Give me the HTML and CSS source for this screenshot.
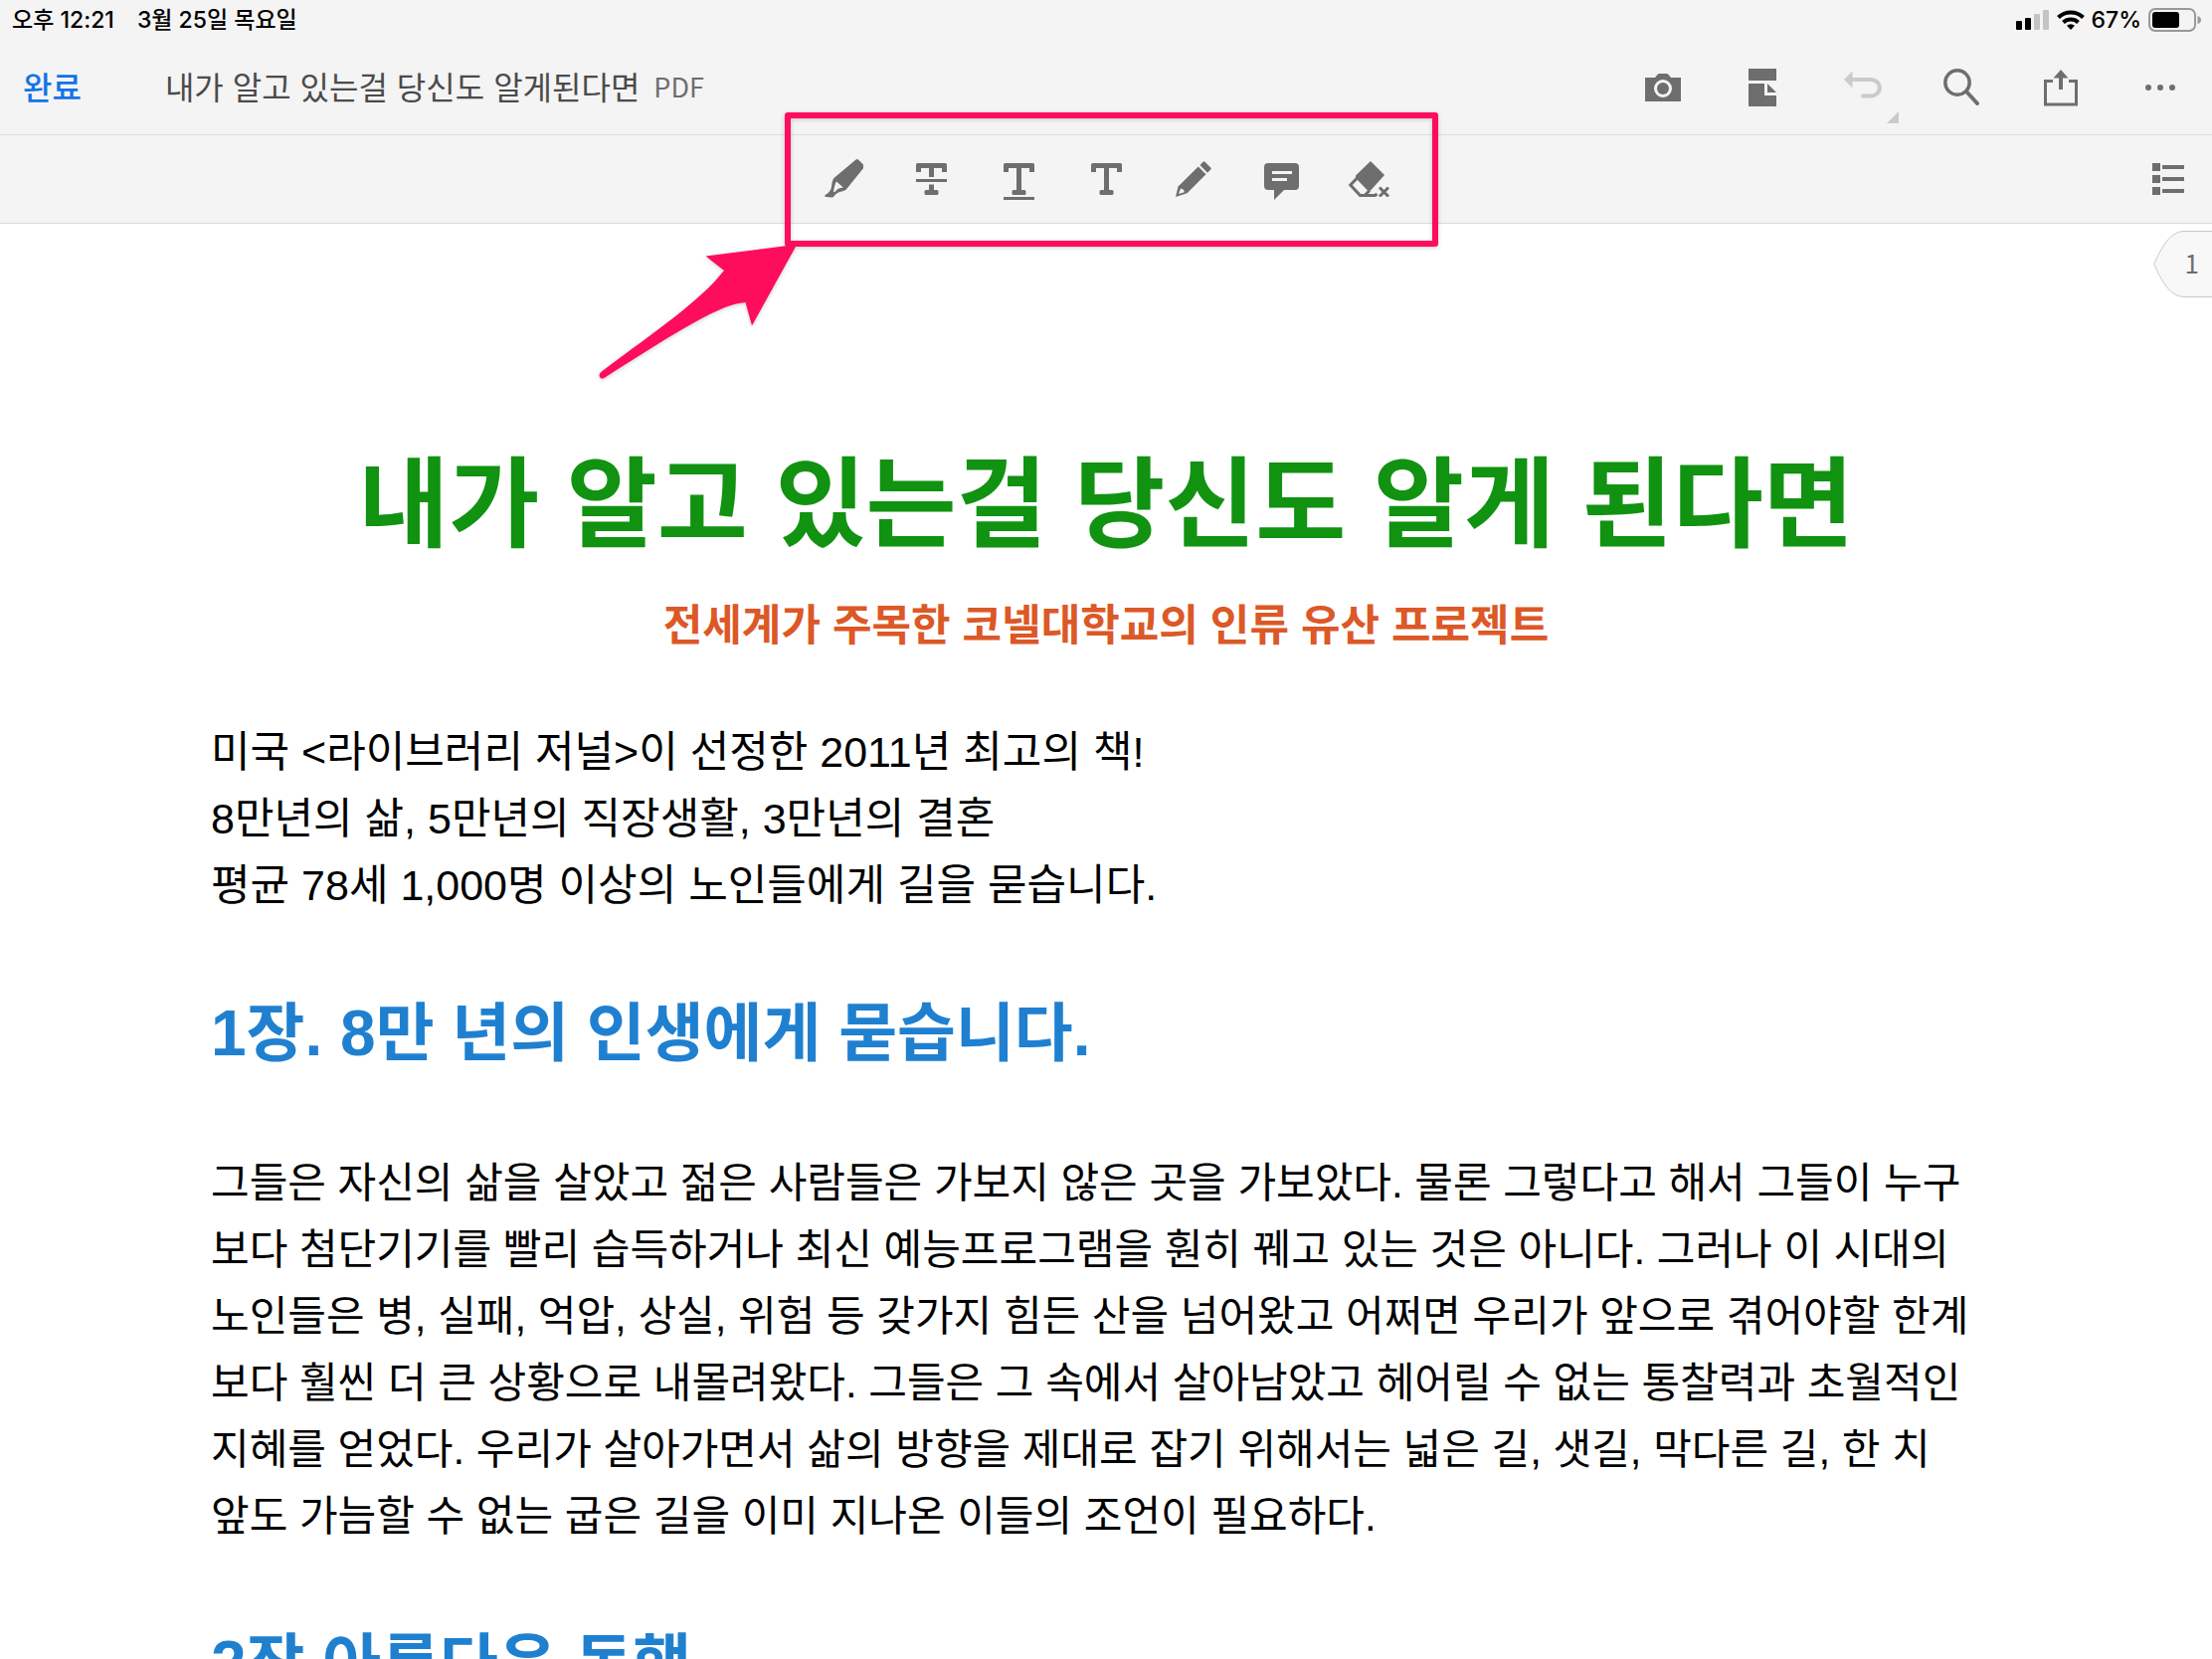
FILE: index.html
```html
<!DOCTYPE html>
<html lang="ko">
<head>
<meta charset="utf-8">
<meta name="viewport" content="width=device-width, initial-scale=1">
<title>내가 알고 있는걸 당신도 알게된다면</title>
<link rel="stylesheet" href="styles.css">
</head>
<body>
<header class="chrome">
  <div class="status">
    <span>오후 12:21</span>
    <span>3월 25일 목요일</span>
    <div class="status-right">
      <svg width="34" height="20" viewBox="0 0 34 20" aria-hidden="true"><rect y="11" width="6" height="9" rx="1"/><rect x="9" y="8" width="6" height="12" rx="1"/><g fill="#c4c4c4"><rect x="18" y="4" width="6" height="16" rx="1"/><rect x="27" width="6" height="20" rx="1"/></g></svg>
      <svg width="28" height="20" viewBox="0 0 28 20" aria-hidden="true"><g fill="none" stroke="#000" stroke-width="4"><path d="M1.500 7.500a18 18 0 0 1 25 0"/><path d="M6.500 12.500a11 11 0 0 1 15 0"/></g><path d="M14 20l-4-4.200a6 6 0 0 1 8 0z"/></svg>
      <span class="percent">67%</span>
      <svg width="54" height="24" viewBox="0 0 54 24" aria-hidden="true"><rect x="1" y="1" width="46" height="22" rx="6" fill="none" stroke="#999" stroke-width="2"/><rect x="4" y="4" width="27" height="16" rx="3"/><path d="M49.500 8q3.500 1 3.500 4t-3.500 4z" fill="#999"/></svg>
    </div>
  </div>
  <nav class="navbar">
    <button class="done">완료</button>
    <h1 class="file">내가 알고 있는걸 당신도 알게된다면</h1>
    <span class="type">PDF</span>
    <div class="actions">
      <button class="action" aria-label="카메라"><svg width="36" height="28" viewBox="0 0 36 28"><path fill-rule="evenodd" d="M0 4h10l3-3.500q.5-.5 1-.5h8q.5 0 1 .5L26 4h10v24H0zM18 6a9 9 0 1 0 0 18 9 9 0 0 0 0-18z"/><circle cx="18" cy="15" r="6"/></svg></button>
      <button class="action" aria-label="보기"><svg width="28" height="38" viewBox="0 0 28 38"><path d="M0 0h28v12H0zM0 15h16v12h12v11H0zM19 15l9 9h-9z"/></svg></button>
      <button class="action undo" aria-label="실행 취소"><svg width="56" height="54" viewBox="0 0 56 54"><path d="M9 10h19a8.500 8 0 0 1 0 16.500H20" fill="none" stroke="#cacaca" stroke-width="4" stroke-linecap="round"/><path d="M1 10l8.500-8.500v17z"/><path d="M56 42v12H44z"/></svg></button>
      <button class="action" aria-label="검색"><svg width="36" height="37" viewBox="0 0 36 37"><g fill="none" stroke="#6e6e6e" stroke-width="3.500"><circle cx="14" cy="14" r="12.200"/><path d="M23 23l11 12" stroke-width="4" stroke-linecap="round"/></g></svg></button>
      <button class="action" aria-label="공유"><svg width="36" height="38" viewBox="0 0 36 38"><path d="M10 12.500H2.500V36h31V12.500H26" fill="none" stroke="#6e6e6e" stroke-width="3"/><path d="M18 1l7.500 8.500H20V21h-4V9.500h-5.500z"/></svg></button>
      <button class="action" aria-label="더보기"><svg width="32" height="6" viewBox="0 0 32 6"><circle cx="4" cy="3" r="3"/><circle cx="16" cy="3" r="3"/><circle cx="28" cy="3" r="3"/></svg></button>
    </div>
  </nav>
  <div class="toolbar">
    <div class="tools">
      <button class="tool" aria-label="강조"><svg width="40" height="40" viewBox="828 160 40 40"><path fill-rule="evenodd" d="M860.500 160.500q1.500-1 3 .5l5 5q1 1.200 0 2.700L852 189q-1.500 2.500-4 3-6 1-8.500 4-1.500 2.500-3 2.500l-6-.500q-2.500-.700-.5-2.200 5.500-3 6-8 .500-6 2.200-8.500zM841 182.500q-2 3-3 10.500l1.800-.2q2-3.800 8-4.300z"/></svg></button>
      <button class="tool" aria-label="취소선"><svg width="31" height="32" viewBox="0 0 31 32"><path d="M1.500 0h28Q31 0 31 1.500V9h-5V5h-8v9h-5V5H5v4H0V1.500Q0 0 1.500 0zM0 16h31v3H0zM13 21.500h5V27h3q1.500 0 1.500 1.500v2q0 1.500-1.500 1.500h-11q-1.500 0-1.500-1.500v-2Q8.500 27 10 27h3z"/></svg></button>
      <button class="tool" aria-label="밑줄"><svg class="low" width="31" height="37" viewBox="0 0 31 37"><path d="M1.500 0h28Q31 0 31 1.500V9h-5V5h-8v22h3q1.500 0 1.500 1.500v2q0 1.500-1.500 1.500h-11q-1.500 0-1.500-1.500v-2Q8.500 27 10 27h3V5H5v4H0V1.500Q0 0 1.500 0zM0 34h31v3H0z"/></svg></button>
      <button class="tool" aria-label="텍스트"><svg width="31" height="32" viewBox="0 0 31 32"><path d="M1.500 0h28Q31 0 31 1.500V9h-5V5h-8v22h3q1.500 0 1.500 1.500v2q0 1.500-1.500 1.500h-11q-1.500 0-1.500-1.500v-2Q8.500 27 10 27h3V5H5v4H0V1.500Q0 0 1.500 0z"/></svg></button>
      <button class="tool" aria-label="그리기"><svg width="36" height="36" viewBox="0 0 36 36"><path fill-rule="evenodd" d="M27.500.8q1-1 2 0l5.700 5.700q1 1 0 2L32 11.700 24.500 4zM22.800 5.500l7.700 7.700-19 19L0 36l2.500-10.500zM5 27.500L3 33l5.700-1.800q0-3-3.700-3.700z"/></svg></button>
      <button class="tool" aria-label="메모"><svg class="low" width="35" height="37" viewBox="0 0 35 37"><path fill-rule="evenodd" d="M4 0h27q4 0 4 4v19q0 4-4 4H20L10 37V27H4q-4 0-4-4V4q0-4 4-4zM8 8v3h20V8zM8 15v3h15v-3z"/></svg></button>
      <button class="tool" aria-label="지우개"><svg width="42" height="36" viewBox="-1 0 42 36"><path d="M22 0l14 14-14 15.500h-3L7 17v-2.500z"/><path d="M8.500 17L1.800 24l9.700 10.500h4.500l5-5M11 34.500h15.500l2-1.500" fill="none" stroke="#6e6e6e" stroke-width="3"/><path d="M31 26.500l9 9M40 26.500l-9 9" stroke="#6e6e6e" stroke-width="3"/></svg></button>
      <svg class="callout" width="850" height="280" viewBox="600 110 850 280" aria-hidden="true"><g fill="#fd0d5c"><path d="M709.500 257.500L792 247l8 1-44 79.500-6.500-23.500c-26 2-65 27-142 76q-3 2-4.500-1t2-5.500c57-43 98-70 123-101.500z"/></g><rect x="792" y="116" width="651" height="129" fill="none" stroke="#fd0d5c" stroke-width="6" stroke-linejoin="round"/></svg>
    </div>
    <button class="tool list" aria-label="목록"><svg width="32" height="32" viewBox="0 0 32 32"><path d="M0 0h8v8H0zM10 2h22v4H10zM0 12h8v8H0zM10 14h22v4H10zM0 24h8v8H0zM10 26h22v4H10z"/></svg></button>
  </div>
</header>
<main class="viewer">
  <button class="page-tag" aria-label="1 페이지"><svg width="59" height="67" viewBox="0 0 59 67"><path d="M60 .5H31C17 .5 8 17 .7 33.500 8 50 17 66.500 31 66.500h29" fill="#f8f8f8" stroke="#c8c8c8"/></svg><span>1</span></button>
  <article class="page">
    <h2 class="title">내가 알고 있는걸 당신도 알게 된다면</h2>
    <p class="subtitle">전세계가 주목한 코넬대학교의 인류 유산 프로젝트</p>
    <p class="lead">미국 &lt;라이브러리 저널&gt;이 선정한 2011년 최고의 책!<br>8만년의 삶, 5만년의 직장생활, 3만년의 결혼<br>평균 78세 1,000명 이상의 노인들에게 길을 묻습니다.</p>
    <h3>1장. 8만 년의 인생에게 묻습니다.</h3>
    <p>그들은 자신의 삶을 살았고 젊은 사람들은 가보지 않은 곳을 가보았다. 물론 그렇다고 해서 그들이 누구<br>보다 첨단기기를 빨리 습득하거나 최신 예능프로그램을 훤히 꿰고 있는 것은 아니다. 그러나 이 시대의<br>노인들은 병, 실패, 억압, 상실, 위험 등 갖가지 힘든 산을 넘어왔고 어쩌면 우리가 앞으로 겪어야할 한계<br>보다 훨씬 더 큰 상황으로 내몰려왔다. 그들은 그 속에서 살아남았고 헤어릴 수 없는 통찰력과 초월적인<br>지혜를 얻었다. 우리가 살아가면서 삶의 방향을 제대로 잡기 위해서는 넓은 길, 샛길, 막다른 길, 한 치<br>앞도 가늠할 수 없는 굽은 길을 이미 지나온 이들의 조언이 필요하다.</p>
    <h3>2장 아름다운 동행</h3>
  </article>
</main>
</body>
</html>
```
FILE: styles.css
```css
* { box-sizing: border-box; }

body {
  margin: 0;
  height: 100vh;
  display: flex;
  flex-direction: column;
  overflow: hidden;
  background: #fff;
  color: #000;
  font-family: "Liberation Sans", "Noto Sans CJK KR", sans-serif;
}

button {
  margin: 0;
  padding: 0;
  border: 0;
  background: none;
  color: inherit;
  font: inherit;
}

svg { display: block; flex: none; }

.chrome { background: #f4f4f4; flex: none; }

.status {
  display: flex;
  align-items: center;
  gap: 23px;
  height: 40px;
  padding: 0 10px 0 12px;
  font: 500 23px/40px Inter, "Noto Sans CJK KR", sans-serif;
}

.status-right {
  display: flex;
  align-items: center;
  gap: 7px;
  margin-left: auto;
}

.navbar {
  display: flex;
  align-items: center;
  height: 96px;
  padding: 0 2px 0 23px;
  border-bottom: 1px solid #dcdcdc;
  font-family: "Noto Sans CJK KR", sans-serif;
  white-space: nowrap;
}

.done, .file, .type { padding-bottom: 3px; }

.done {
  color: #1473e6;
  font-size: 32px;
  font-weight: 500;
}

.file {
  margin: 0 14px 0 84px;
  color: #4b4b4b;
  font-size: 32px;
  font-weight: 400;
}

.type { color: #6e6e6e; font-size: 27px; }

.actions { display: flex; margin-left: auto; }

.action, .tool {
  display: flex;
  align-items: center;
  justify-content: center;
  height: 88px;
  fill: #6e6e6e;
}

.action { width: 100px; }

.undo { align-items: flex-end; padding: 0 0 8px 18px; fill: #cacaca; }

.toolbar {
  display: grid;
  grid-template-columns: 1fr auto 1fr;
  height: 89px;
  border-bottom: 1px solid #dcdcdc;
}

.tools { position: relative; grid-column: 2; display: flex; }

.tool { width: 88px; }

.low { margin-top: 5px; }

.list { justify-self: end; }

.callout {
  position: absolute;
  z-index: 1;
  left: -204px;
  top: -26px;
  pointer-events: none;
  filter: drop-shadow(0 1px 2px #0003);
}

.viewer { position: relative; flex: 1; min-height: 0; }

.page-tag {
  position: absolute;
  top: 7px;
  right: 0;
  color: #6e6e6e;
  font: 26px "Noto Sans CJK KR", sans-serif;
}

.page-tag span {
  position: absolute;
  inset: 0 13px 0 auto;
  line-height: 64px;
}

.page {
  padding: 223px 212px 0;
  font-size: 42px;
  line-height: 67px;
  white-space: nowrap;
}

.page p { margin: 0; }

.page .title {
  margin: 0 0 28px;
  color: #119211;
  font-size: 99px;
  line-height: 120px;
  text-align: center;
}

.page .subtitle {
  margin-bottom: 60px;
  color: #dc5826;
  font-size: 43px;
  font-weight: 700;
  text-align: center;
}

.page .lead { font-size: 43px; }

.page h3 {
  margin: 75px 0 77px;
  color: #2080d0;
  font-size: 64px;
  line-height: 80px;
}
```
